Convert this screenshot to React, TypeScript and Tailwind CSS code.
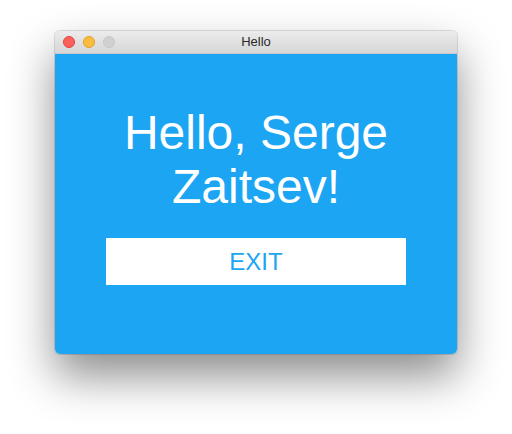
export default function App() {
  return (
    <div className="flex h-[434px] w-[512px] justify-center bg-white pt-[31px] font-['Liberation_Sans',Arial,sans-serif]">
      <div className="flex h-[323px] w-[402px] flex-col overflow-hidden rounded-[5px] shadow-[0_22px_45px_rgba(0,0,0,0.45),0_0_0_1px_rgba(0,0,0,0.12)]">
        <div className="relative flex h-[23px] items-center justify-center border-b border-[#c8c8c8] bg-gradient-to-b from-[#ececec] to-[#d6d6d6]">
          <div className="absolute left-[8px] top-[5px] flex gap-[8px]">
            <span className="h-[12px] w-[12px] rounded-full border border-[#e0443e] bg-[#fc605b]" />
            <span className="h-[12px] w-[12px] rounded-full border border-[#dea123] bg-[#fdbc40]" />
            <span className="h-[12px] w-[12px] rounded-full border border-[#c6c6c6] bg-[#d0d0d0]" />
          </div>
          <span className="text-[13px] text-[#2b2b2b]">Hello</span>
        </div>
        <div className="flex flex-1 flex-col items-center bg-[#1ba5f3] pt-[52px]">
          <h1 className="text-center text-[48px] leading-[54px] text-white">
            Hello, Serge
            <br />
            Zaitsev!
          </h1>
          <button className="mt-[24px] h-[47px] w-[300px] bg-white text-[24px] text-[#1ba5f3]">
            EXIT
          </button>
        </div>
      </div>
    </div>
  );
}
